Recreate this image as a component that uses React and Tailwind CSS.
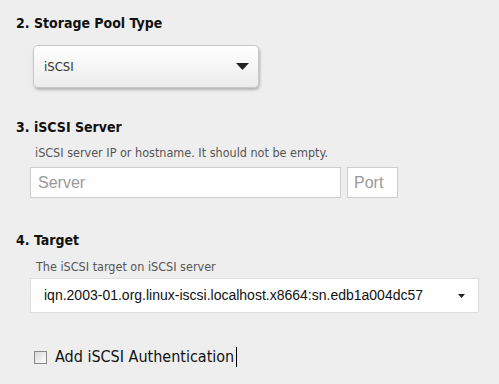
export default function App() {
  const sans = { fontFamily: '"DejaVu Sans Condensed", "DejaVu Sans", sans-serif' };
  return (
    <div className="w-[499px] h-[384px] bg-[#eeeeee] overflow-hidden relative">
      <div className="pl-[16px] pt-[14px]">
        <h2 className="text-[14px] font-bold text-[#111] leading-[18px]" style={sans}>2. Storage Pool Type</h2>
        <div className="mt-[13px] ml-[17px] w-[226px] h-[43px] rounded-[5px] border border-[#c8c8c8] bg-gradient-to-b from-[#ffffff] to-[#ececec] shadow-[1px_2px_3px_rgba(0,0,0,0.25)] flex items-center justify-between pl-[10px] pr-[9px]">
          <span className="text-[13px] text-[#333]" style={sans}>iSCSI</span>
          <svg width="13" height="7" viewBox="0 0 13 7"><polygon points="0,0 13,0 6.5,7" fill="#222" /></svg>
        </div>

        <h2 className="mt-[30px] text-[14px] font-bold text-[#111] leading-[18px]" style={sans}>3. iSCSI Server</h2>
        <p className="mt-[9px] ml-[19px] text-[12.5px] text-[#555] leading-[16px]" style={sans}>iSCSI server IP or hostname. It should not be empty.</p>
        <div className="mt-[6px] ml-[14px] flex gap-[6px]">
          <div className="w-[311px] h-[31px] bg-white border border-[#cccccc] flex items-center pl-[7px]">
            <span className="text-[16px] text-[#999]" style={{ fontFamily: '"Liberation Sans", Arial, sans-serif' }}>Server</span>
          </div>
          <div className="w-[51px] h-[31px] bg-white border border-[#cccccc] flex items-center pl-[6px]">
            <span className="text-[16px] text-[#999]" style={{ fontFamily: '"Liberation Sans", Arial, sans-serif' }}>Port</span>
          </div>
        </div>

        <h2 className="mt-[33px] text-[14px] font-bold text-[#111] leading-[18px]" style={sans}>4. Target</h2>
        <p className="mt-[10px] ml-[20px] text-[12.5px] text-[#555] leading-[16px]" style={sans}>The iSCSI target on iSCSI server</p>
        <div className="mt-[3px] ml-[14px] w-[449px] h-[35px] bg-white border border-[#dddddd] flex items-center justify-between pl-[13px] pr-[13px]">
          <span className="text-[14px] text-[#111]" style={{ fontFamily: '"Liberation Sans", Arial, sans-serif' }}>iqn.2003-01.org.linux-iscsi.localhost.x8664:sn.edb1a004dc57</span>
          <svg width="7" height="4" viewBox="0 0 7 4"><polygon points="0,0 7,0 3.5,4" fill="#222" /></svg>
        </div>

        <div className="mt-[34px] ml-[18px] flex items-center gap-[8px]">
          <div className="w-[13px] h-[13px] border border-[#888] bg-gradient-to-br from-[#d8d8d8] to-[#ffffff]"></div>
          <span className="text-[16px] text-[#111] leading-[20px]" style={sans}>Add iSCSI Authentication</span>
          <span className="w-[1px] h-[20px] bg-black -ml-[6px]"></span>
        </div>
      </div>
    </div>
  );
}
